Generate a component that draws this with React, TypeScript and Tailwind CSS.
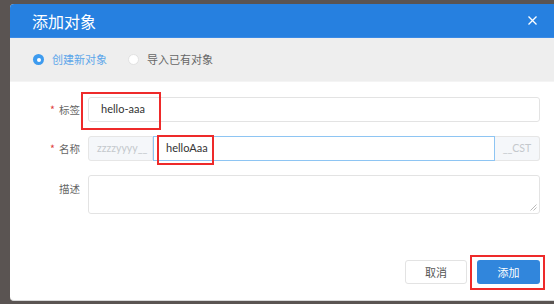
import React from "react";

export default function App() {
  const cjk = { fontFamily: '"Noto Sans CJK SC", "Noto Sans", sans-serif' };
  const lat = { fontFamily: 'Lato, "Noto Sans CJK SC", sans-serif' };
  return (
    <div className="w-[554px] h-[304px] bg-[#5a5452] overflow-hidden relative" style={cjk}>
      <div className="absolute left-[10px] top-[4px] w-[544px] h-[297px] bg-white rounded-l-[4px] overflow-hidden flex flex-col border-b border-[#d8d8d8]">
        {/* header */}
        <div className="h-[34px] bg-[#2680e0] border-b border-[#3a8ae6] flex items-center pl-[22px] pr-[17px] justify-between shrink-0">
          <span className="text-white text-[16px] leading-none">添加对象</span>
          <svg width="9" height="9" viewBox="0 0 9 9">
            <path d="M0.5 0.5 L8.5 8.5 M8.5 0.5 L0.5 8.5" stroke="white" strokeWidth="1.3" />
          </svg>
        </div>
        {/* tabs */}
        <div className="h-[44px] bg-[#eeeeee] flex items-center pl-[23px] shrink-0 border-b border-[#f4f4f4]">
          <div className="flex items-center gap-[8px]">
            <span className="w-[11px] h-[11px] rounded-full bg-[#3d9bef] flex items-center justify-center">
              <span className="w-[4px] h-[4px] rounded-full bg-white"></span>
            </span>
            <span className="text-[11px] text-[#5da6ea]">创建新对象</span>
          </div>
          <div className="flex items-center gap-[8px] ml-[21px]">
            <span className="w-[11px] h-[11px] rounded-full bg-white border border-[#e2e2e2]"></span>
            <span className="text-[11px] text-[#666666]">导入已有对象</span>
          </div>
        </div>
        {/* form */}
        <div className="flex flex-col pt-[15px] pr-[14px] gap-[14px]">
          <div className="flex items-center">
            <div className="w-[70px] text-right text-[10.5px] text-[#666]">
              <span className="text-[#e04040] mr-[4px]">*</span>标签
            </div>
            <div className="ml-[8px] flex-1 h-[25px] border border-[#e3e3e3] rounded-[3px] flex items-center pl-[12px] text-[11px] text-[#333]" style={lat}>
              hello-aaa
            </div>
          </div>
          <div className="flex items-center">
            <div className="w-[70px] text-right text-[10.5px] text-[#666]">
              <span className="text-[#e04040] mr-[4px]">*</span>名称
            </div>
            <div className="ml-[8px] flex-1 h-[25px] flex">
              <div className="w-[65px] bg-[#f5f7fa] border border-[#e6e6e6] rounded-l-[3px] flex items-center pl-[8px] text-[10.5px] text-[#c4c8cc]" style={lat}>
                zzzzyyyy__
              </div>
              <div className="flex-1 border border-[#8ec5f3] flex items-center pl-[12px] text-[11px] text-[#333]" style={lat}>
                helloAaa
              </div>
              <div className="w-[45px] bg-[#f5f7fa] border border-[#e6e6e6] border-l-0 rounded-r-[3px] flex items-center justify-center text-[10.5px] text-[#c4c8cc]" style={lat}>
                __CST
              </div>
            </div>
          </div>
          <div className="flex items-start">
            <div className="w-[70px] text-right text-[10.5px] text-[#666] pt-[6px]">描述</div>
            <div className="ml-[8px] flex-1 h-[39px] border border-[#e3e3e3] rounded-[3px] relative">
              <svg width="7" height="7" viewBox="0 0 7 7" className="absolute right-[2px] bottom-[2px]">
                <path d="M6.5 0.5 L0.5 6.5 M6.5 3.5 L3.5 6.5" stroke="#aaa" strokeWidth="0.8" />
              </svg>
            </div>
          </div>
        </div>
        <div className="flex justify-end gap-[10px] pr-[14px] mt-[46px]">
          <div className="w-[62px] h-[24px] border border-[#e3e3e3] rounded-[3px] flex items-center justify-center text-[11px] text-[#555]">
            取消
          </div>
          <div className="w-[63px] h-[24px] bg-[#3186dc] rounded-[3px] flex items-center justify-center text-[11px] text-white">
            添加
          </div>
        </div>
      </div>
      {/* annotation boxes */}
      <div className="absolute left-[81px] top-[92px] w-[80px] h-[38px] border-2 border-[#ee2a2a]"></div>
      <div className="absolute left-[157px] top-[135px] w-[57px] h-[30px] border-2 border-[#ee2a2a]"></div>
      <div className="absolute left-[470px] top-[255px] w-[75px] h-[35px] border-2 border-[#ee2a2a]"></div>
    </div>
  );
}
